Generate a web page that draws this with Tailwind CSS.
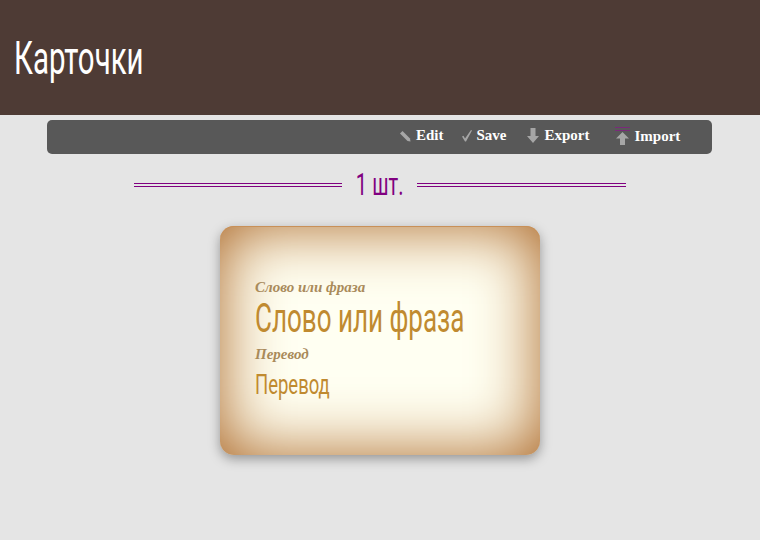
<!DOCTYPE html>
<html lang="en">
<head>
    <meta charset="UTF-8">
    <meta name="viewport" content="width=device-width, initial-scale=1.0">
    <title>Карточки</title>
    <script src="https://cdn.jsdelivr.net/npm/@tailwindcss/browser@4"></script>
</head>
<body class="bg-[#e5e5e5] min-h-screen overflow-hidden font-['Roboto','Liberation_Sans',sans-serif]">

    <header class="h-[115px] bg-[#4e3b35] flex items-center px-[14px]">
        <h1 class="text-[46px] leading-none text-white origin-left scale-x-[0.64] whitespace-nowrap">Карточки</h1>
    </header>

    <nav class="mx-[47px] mt-[5px] w-[665px] h-[34px] bg-[#585858] rounded-[5px] flex items-center font-['Liberation_Serif',serif] font-bold text-[15px] text-white">
        <div class="flex items-center ml-[353px] gap-[5px] -mt-[3px]">
            <svg width="11" height="12" viewBox="0 0 11 12"><path d="M0 3.500 2.500 1 10 8.500 10.500 11.500 7.500 11Z" fill="#a6a6a6"/></svg>
            <span>Edit</span>
        </div>
        <div class="flex items-center ml-[18px] gap-[5px] -mt-[3px]">
            <svg width="10" height="13" viewBox="0 0 10 13"><path d="M0 7.500 1.500 6.800 3 9.500 9 1 10 1.500 4 12.500H3Z" fill="#a6a6a6"/></svg>
            <span>Save</span>
        </div>
        <div class="flex items-center ml-[20px] gap-[6px] -mt-[3px]">
            <svg width="12" height="15" viewBox="0 0 12 15"><path d="M3.500 0H8.500V8H12L6 15 0 8H3.500Z" fill="#a6a6a6"/></svg>
            <span>Export</span>
        </div>
        <div class="flex items-center ml-[26px] gap-[6px] -mt-[1px]">
            <div class="flex flex-col items-center w-[13px] -mt-[2px]">
                <div class="w-[15px] h-[4px] shrink-0 border-y border-[#7a2a7a]"></div>
                <svg width="13" height="13" viewBox="0 0 13 13" class="mt-[1px]"><path d="M4 13H9V6.500H13L6.500 0 0 6.500H4Z" fill="#a6a6a6"/></svg>
            </div>
            <span>Import</span>
        </div>
    </nav>

    <div class="mx-auto mt-[13px] w-[492px] h-[36px] flex items-center justify-between text-[#800080]">
        <div class="w-[208px] h-[4px] border-y border-[#800080]"></div>
        <span class="text-[31px] leading-[36px] origin-center scale-x-[0.65] whitespace-nowrap">1 шт.</span>
        <div class="w-[209px] h-[4px] border-y border-[#800080]"></div>
    </div>

    <main class="mt-[23px] mx-auto w-[320px] h-[229px] rounded-[14px] bg-[#fffff2] shadow-[inset_0_1px_0_#c89058,inset_0_0_65px_#a9621f,0_4px_12px_rgba(0,0,0,0.35)] pl-[35px] pt-[51px] text-[#c08a30]">
        <p class="font-['Liberation_Serif',serif] italic font-bold text-[15px] leading-[20px] text-[#a98a5a]">Слово или фраза</p>
        <p class="text-[40px] leading-[44px] origin-left scale-x-[0.65] whitespace-nowrap">Слово или фраза</p>
        <p class="font-['Liberation_Serif',serif] italic font-bold text-[15px] leading-[20px] text-[#a98a5a] mt-[3px]">Перевод</p>
        <p class="text-[28px] leading-[34px] mt-[4px] origin-left scale-x-[0.66] whitespace-nowrap">Перевод</p>
    </main>

</body>
</html>
